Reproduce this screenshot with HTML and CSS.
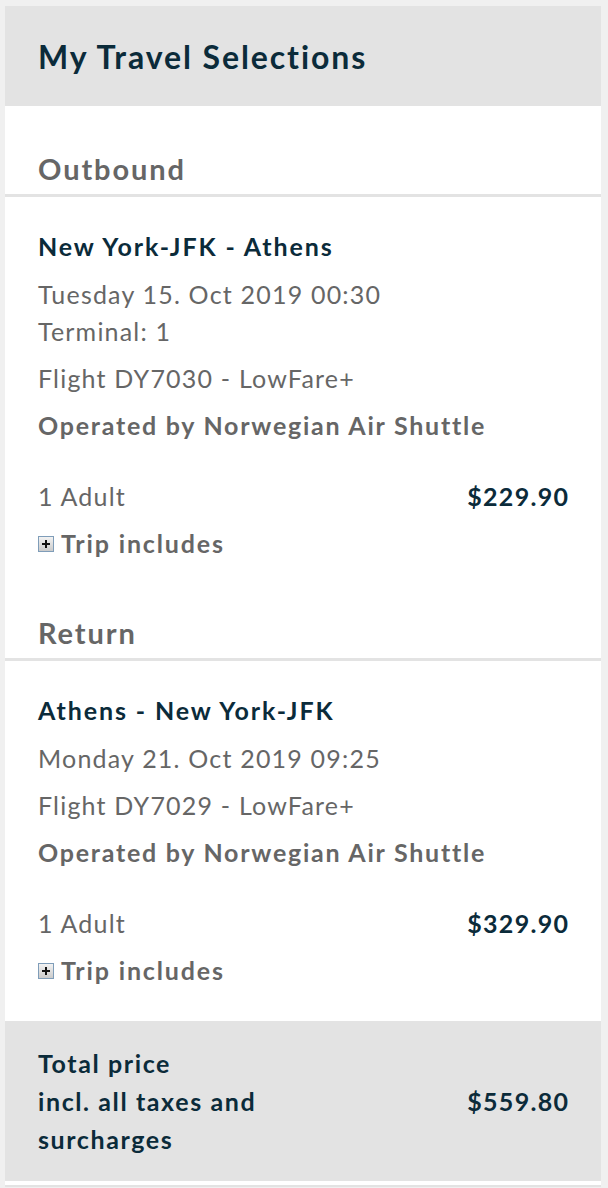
FILE: index.html
```html
<!DOCTYPE html>
<html lang="en">
<head>
<meta charset="utf-8">
<title>My Travel Selections</title>
<link rel="stylesheet" href="styles.css">
</head>
<body>
<div class="card">
  <div class="header"><h1>My Travel Selections</h1></div>

  <div class="leg-title">Outbound</div>
  <div class="leg">
    <div class="route">New York-JFK - Athens</div>
    <div class="line date">Tuesday 15. Oct 2019 00:30</div>
    <div class="line">Terminal: 1</div>
    <div class="line gap">Flight DY7030 - LowFare+</div>
    <div class="line gap operated">Operated by Norwegian Air Shuttle</div>
    <div class="price-row">
      <span>1 Adult</span>
      <span class="price">$229.90</span>
    </div>
    <div class="trip">
      <svg class="plus" width="16" height="16" viewBox="0 0 16 16" aria-hidden="true">
        <defs>
          <linearGradient id="pg1" x1="0" y1="0" x2="0" y2="1">
            <stop offset="0" stop-color="#f4f4f4"/>
            <stop offset="1" stop-color="#c9c9c9"/>
          </linearGradient>
        </defs>
        <rect x="0.5" y="0.5" width="15" height="15" fill="url(#pg1)" stroke="#7f9db9"/>
        <path d="M4 8h8M8 4v8" stroke="#111" stroke-width="2"/>
      </svg>
      <span>Trip includes</span>
    </div>
  </div>

  <div class="leg-title return">Return</div>
  <div class="leg">
    <div class="route">Athens - New York-JFK</div>
    <div class="line date">Monday 21. Oct 2019 09:25</div>
    <div class="line gap">Flight DY7029 - LowFare+</div>
    <div class="line gap operated">Operated by Norwegian Air Shuttle</div>
    <div class="price-row">
      <span>1 Adult</span>
      <span class="price">$329.90</span>
    </div>
    <div class="trip">
      <svg class="plus" width="16" height="16" viewBox="0 0 16 16" aria-hidden="true">
        <defs>
          <linearGradient id="pg2" x1="0" y1="0" x2="0" y2="1">
            <stop offset="0" stop-color="#f4f4f4"/>
            <stop offset="1" stop-color="#c9c9c9"/>
          </linearGradient>
        </defs>
        <rect x="0.5" y="0.5" width="15" height="15" fill="url(#pg2)" stroke="#7f9db9"/>
        <path d="M4 8h8M8 4v8" stroke="#111" stroke-width="2"/>
      </svg>
      <span>Trip includes</span>
    </div>
  </div>

  <div class="total">
    <div class="total-label">Total price<br>incl. all taxes and<br>surcharges</div>
    <div class="total-price">$559.80</div>
  </div>
</div>
</body>
</html>
```

FILE: styles.css
```css
html, body {
  margin: 0;
  padding: 0;
  background: #f0f0f0;
}

body {
  font-family: Lato, "Liberation Sans", sans-serif;
  color: #666666;
  padding: 6px 7px 0 5px;
}

.card {
  background: #ffffff;
  padding-bottom: 4px;
  border-bottom: 2px solid #e3e3e3;
}

.header {
  background: #e3e3e3;
  height: 100px;
  display: flex;
  align-items: center;
  padding-left: 33px;
}

.header h1 {
  margin: 0;
  font-size: 32px;
  font-weight: 700;
  color: #0b2b3a;
  letter-spacing: 1.9px;
}

.leg-title {
  padding: 45px 33px 7px;
  line-height: 36px;
  font-size: 29px;
  font-weight: 700;
  color: #666666;
  letter-spacing: 1.9px;
  border-bottom: 3px solid #e3e3e3;
}

.leg-title.return {
  padding-top: 53px;
}

.leg {
  padding: 31px 33px 0 33px;
  font-size: 25px;
  line-height: 37px;
  letter-spacing: 1.2px;
}

.route {
  font-weight: 700;
  color: #0b2b3a;
  letter-spacing: 1.9px;
}

.line.date {
  margin-top: 11px;
}

.line.gap {
  margin-top: 10px;
}

.operated {
  font-weight: 700;
  letter-spacing: 1.75px;
}

.price-row {
  display: flex;
  justify-content: space-between;
  margin-top: 34px;
}

.price {
  font-weight: 700;
  color: #0b2b3a;
  letter-spacing: 1.3px;
  margin-right: -1.3px;
}

.trip {
  display: flex;
  align-items: center;
  gap: 7px;
  margin-top: 10px;
  font-weight: 700;
  letter-spacing: 1.85px;
}

.plus {
  flex: none;
}

.total {
  margin-top: 32px;
  background: #e3e3e3;
  padding: 23px 33px 23px;
  display: flex;
  justify-content: space-between;
  align-items: center;
  font-size: 25px;
  line-height: 38px;
  font-weight: 700;
  color: #0b2b3a;
  letter-spacing: 1.6px;
}

.total-price {
  letter-spacing: 1.3px;
  margin-right: -1.3px;
}
```
